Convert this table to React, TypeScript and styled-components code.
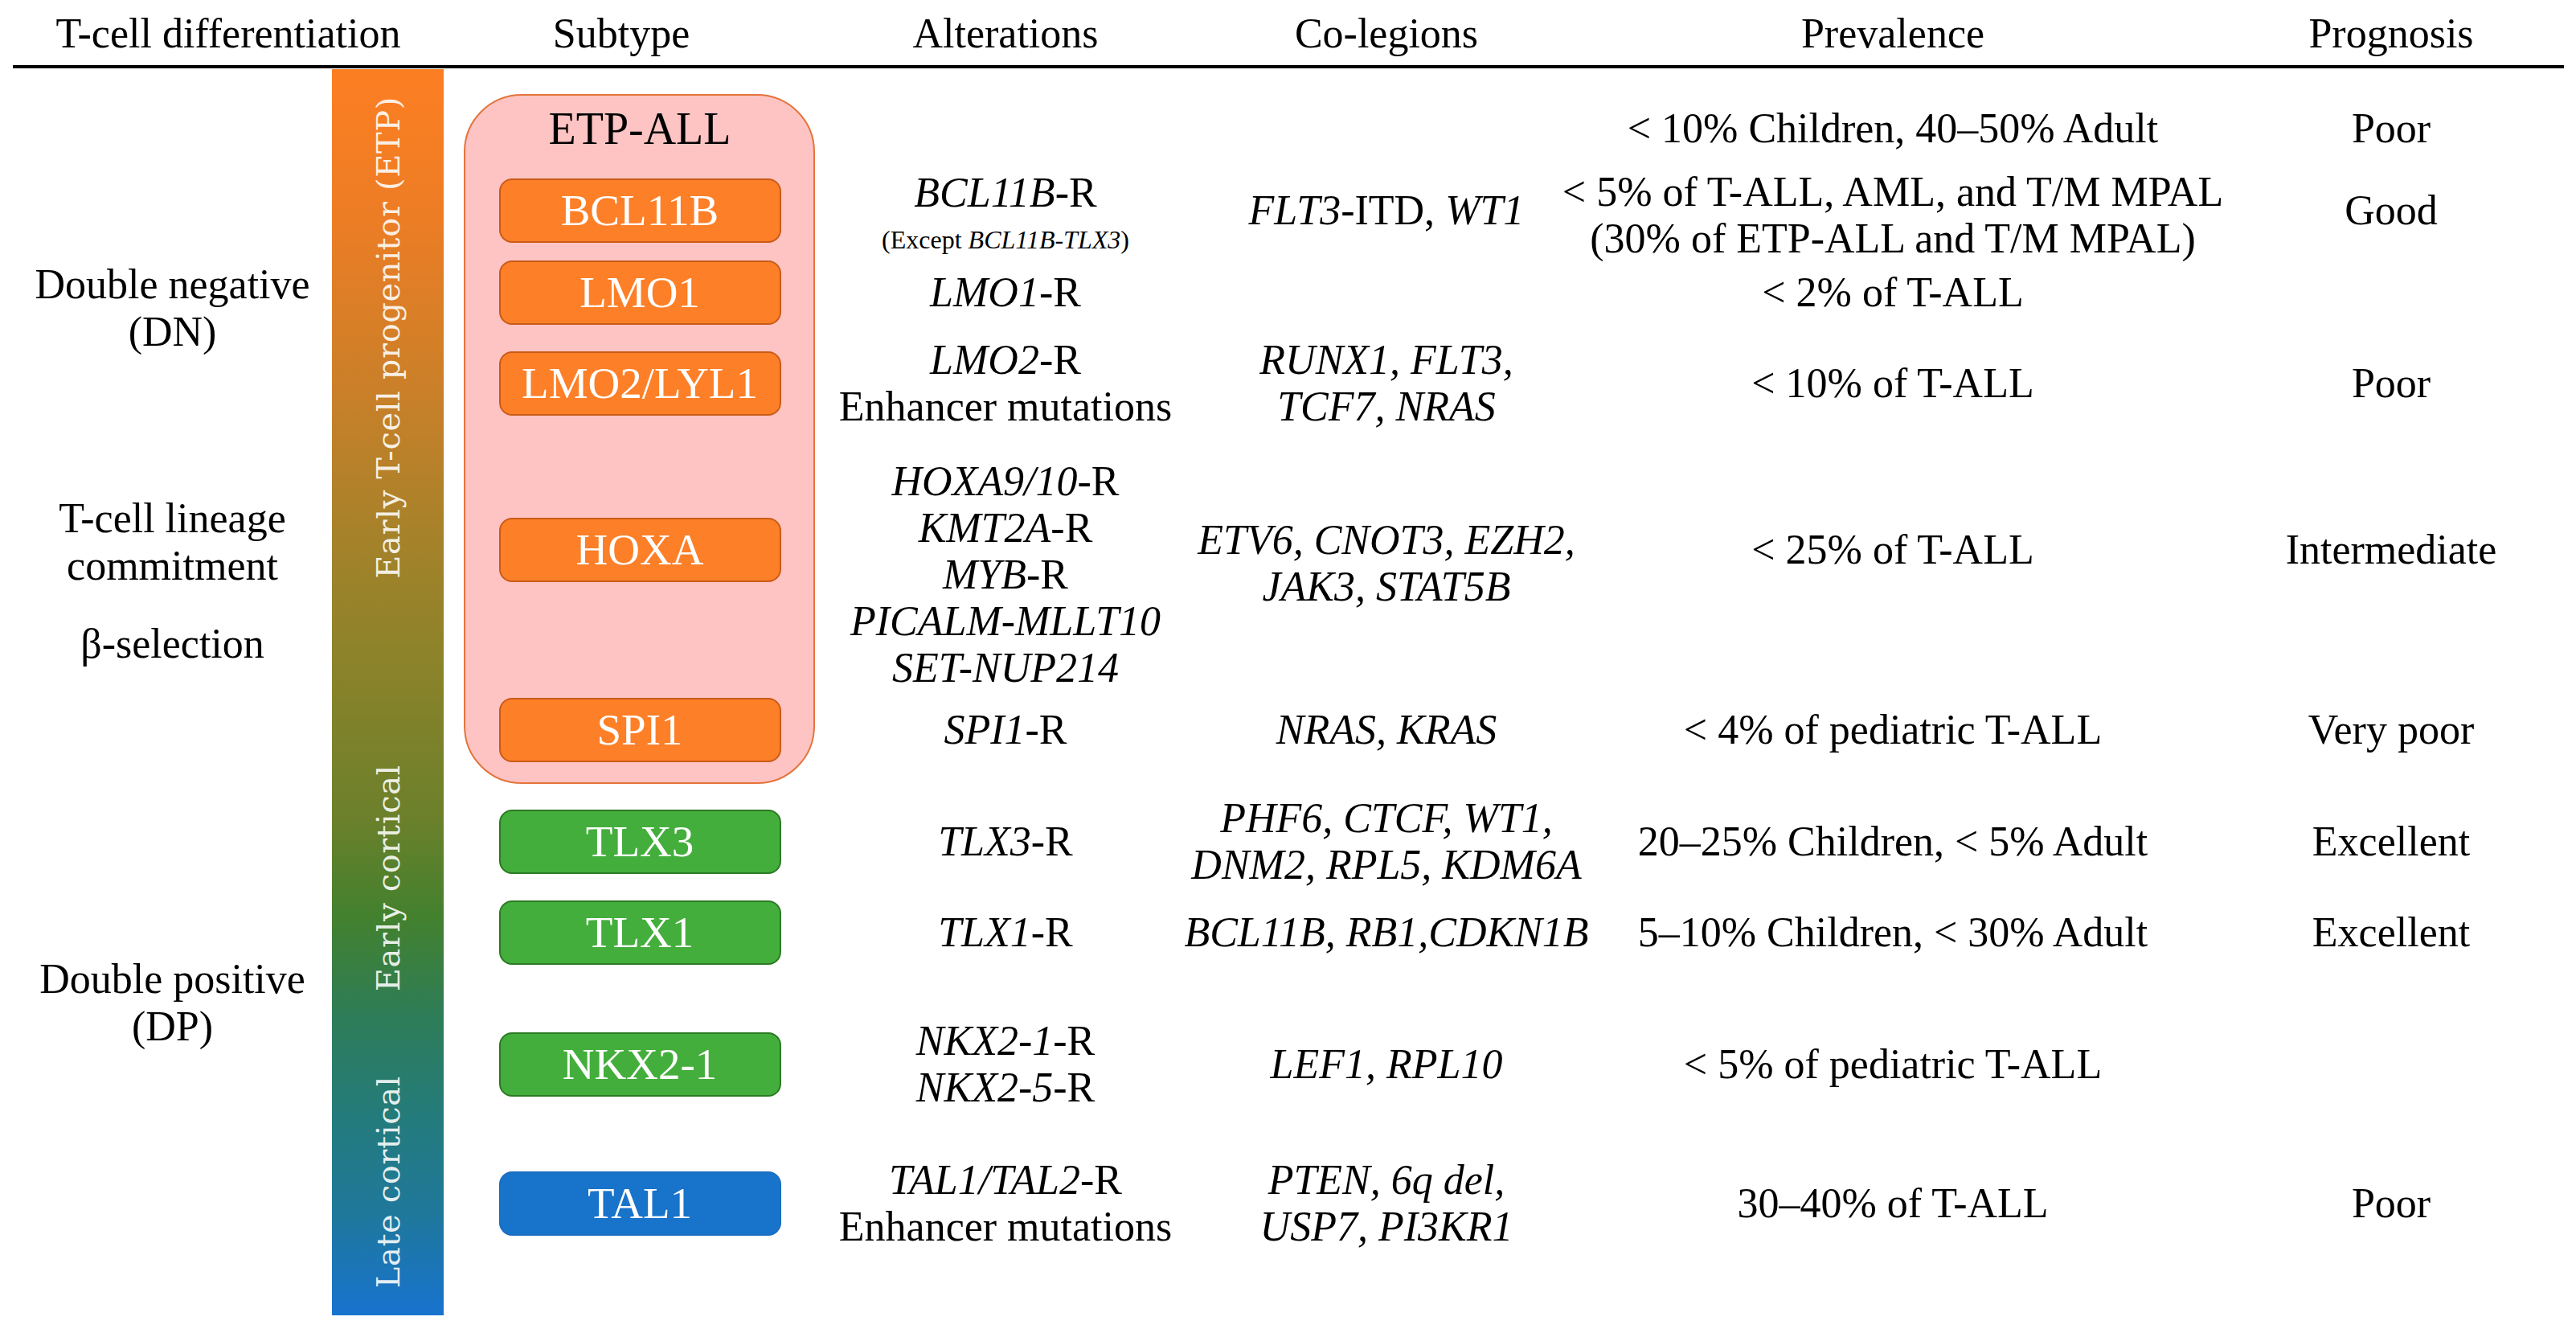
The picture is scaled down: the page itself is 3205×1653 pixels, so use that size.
import React from "react";
import styled, { createGlobalStyle } from "styled-components";

type Tone = "orange" | "green" | "blue";

interface SubtypeRow {
  id: string;
  subtype: { label: string; tone: Tone } | null;
  alt?: React.ReactNode;
  coLesions?: React.ReactNode;
  prevalence?: React.ReactNode;
  prognosis?: string;
  dy?: { alt?: number; col?: number; prev?: number };
}

const TONES: Record<Tone, { fill: string; edge: string }> = {
  orange: { fill: "#fd7f27", edge: "#c95b18" },
  green: { fill: "#44ae3c", edge: "#2b7a23" },
  blue: { fill: "#1873cb", edge: "#1b6ec0" },
};

// heights of the ten data rows, chosen so that each row centre sits where the figure has it
const ROW_HEIGHTS = [100, 104, 100, 126, 288, 160, 118, 108, 220, 126];

const GlobalStyle = createGlobalStyle`
  html, body {
    margin: 0;
    padding: 0;
    background: #ffffff;
  }
  body {
    font-family: "Liberation Serif", "Times New Roman", serif;
    color: #000000;
    overflow: hidden;
  }
`;

const Page = styled.div`
  width: 3174px;
  padding: 0 15px 0 16px;
`;

const Header = styled.div`
  display: grid;
  grid-template-columns: 536px 442px 514px 434px 826px 414px;
  padding: 12px 0 9px;
  border-bottom: 4px solid #000000;
  font-size: 52px;
  line-height: 60px;
`;

const HeadCell = styled.div`
  text-align: center;
  white-space: nowrap;
`;

const Body = styled.div`
  display: grid;
  grid-template-columns: 397px 139px 488px 422px 526px 734px 38px 430px;
  grid-template-rows: 24px ${ROW_HEIGHTS.map((h) => `${h}px`).join(" ")} 76px;
  margin-top: 1px;
`;

const StageColumn = styled.div`
  grid-column: 1;
  grid-row: 1 / -1;
  display: flex;
  flex-direction: column;
  align-items: center;
  font-size: 52px;
  line-height: 59px;
  text-align: center;
  white-space: nowrap;
`;

const Stage = styled.div<{ $gap: number }>`
  margin-top: ${(p) => p.$gap}px;
`;

const Bar = styled.div`
  grid-column: 2;
  grid-row: 1 / -1;
  display: flex;
  flex-direction: column;
  background: linear-gradient(
    to bottom,
    #fd7e22 0%,
    #ec7d25 12%,
    #c98029 26%,
    #a4822a 38%,
    #8d832a 47%,
    #6c802b 60%,
    #43812e 68%,
    #2e7d58 76%,
    #247b7b 84%,
    #1f789c 92%,
    #1873cf 100%
  );
`;

const BarSlot = styled.div<{ $h: number; $gap: number }>`
  flex: none;
  height: ${(p) => p.$h}px;
  margin-top: ${(p) => p.$gap}px;
  display: flex;
  align-items: center;
  justify-content: center;
`;

const BarLabel = styled.span`
  writing-mode: vertical-rl;
  transform: rotate(180deg);
  font-family: "DejaVu Serif", serif;
  font-size: 40px;
  letter-spacing: 0.6px;
  color: rgba(255, 255, 255, 0.88);
  white-space: nowrap;
`;

const EtpGroup = styled.div`
  grid-column: 3;
  grid-row: 2 / 8;
  margin: 7px 26px 13px 25px;
  background: #fec3c3;
  border: 2px solid #e4743c;
  border-radius: 72px;
`;

const Cell = styled.div<{ $row: number; $col: number; $dy?: number }>`
  grid-row: ${(p) => p.$row};
  grid-column: ${(p) => p.$col};
  align-self: center;
  justify-self: center;
  text-align: center;
  white-space: nowrap;
  font-size: 52px;
  line-height: 58px;
  ${(p) =>
    p.$dy
      ? p.$dy > 0
        ? `padding-top: ${p.$dy * 2}px;`
        : `padding-bottom: ${-p.$dy * 2}px;`
      : ""}
`;

const GroupTitle = styled.div`
  font-size: 56px;
  line-height: 60px;
`;

const SubtypeBox = styled.div<{ $tone: Tone }>`
  box-sizing: border-box;
  width: 351px;
  height: 80px;
  border-radius: 16px;
  border: 2px solid ${(p) => TONES[p.$tone].edge};
  background: ${(p) => TONES[p.$tone].fill};
  color: #ffffff;
  font-size: 55px;
  line-height: 76px;
  text-align: center;
`;

const Line = styled.div``;

const Note = styled.div`
  font-size: 32px;
  line-height: 58px;
`;

const G = styled.i`
  font-style: italic;
`;

const rows: SubtypeRow[] = [
  {
    id: "etp",
    subtype: null,
    prevalence: "< 10% Children, 40–50% Adult",
    prognosis: "Poor",
  },
  {
    id: "bcl11b",
    subtype: { label: "BCL11B", tone: "orange" },
    alt: (
      <>
        <Line>
          <G>BCL11B</G>-R
        </Line>
        <Note>
          (Except <G>BCL11B-TLX3</G>)
        </Note>
      </>
    ),
    coLesions: (
      <>
        <G>FLT3</G>-ITD, <G>WT1</G>
      </>
    ),
    prevalence: (
      <>
        <Line>&lt; 5% of T-ALL, AML, and T/M MPAL</Line>
        <Line>(30% of ETP-ALL and T/M MPAL)</Line>
      </>
    ),
    prognosis: "Good",
    dy: { alt: 7, prev: 6 },
  },
  {
    id: "lmo1",
    subtype: { label: "LMO1", tone: "orange" },
    alt: (
      <>
        <G>LMO1</G>-R
      </>
    ),
    prevalence: "< 2% of T-ALL",
  },
  {
    id: "lmo2",
    subtype: { label: "LMO2/LYL1", tone: "orange" },
    alt: (
      <>
        <Line>
          <G>LMO2</G>-R
        </Line>
        <Line>Enhancer mutations</Line>
      </>
    ),
    coLesions: (
      <>
        <Line>
          <G>RUNX1, FLT3,</G>
        </Line>
        <Line>
          <G>TCF7, NRAS</G>
        </Line>
      </>
    ),
    prevalence: "< 10% of T-ALL",
    prognosis: "Poor",
  },
  {
    id: "hoxa",
    subtype: { label: "HOXA", tone: "orange" },
    alt: (
      <>
        <Line>
          <G>HOXA9/10</G>-R
        </Line>
        <Line>
          <G>KMT2A</G>-R
        </Line>
        <Line>
          <G>MYB</G>-R
        </Line>
        <Line>
          <G>PICALM-MLLT10</G>
        </Line>
        <Line>
          <G>SET-NUP214</G>
        </Line>
      </>
    ),
    coLesions: (
      <>
        <Line>
          <G>ETV6, CNOT3, EZH2,</G>
        </Line>
        <Line>
          <G>JAK3, STAT5B</G>
        </Line>
      </>
    ),
    prevalence: "< 25% of T-ALL",
    prognosis: "Intermediate",
    dy: { alt: 31, col: 17 },
  },
  {
    id: "spi1",
    subtype: { label: "SPI1", tone: "orange" },
    alt: (
      <>
        <G>SPI1</G>-R
      </>
    ),
    coLesions: <G>NRAS, KRAS</G>,
    prevalence: "< 4% of pediatric T-ALL",
    prognosis: "Very poor",
  },
  {
    id: "tlx3",
    subtype: { label: "TLX3", tone: "green" },
    alt: (
      <>
        <G>TLX3</G>-R
      </>
    ),
    coLesions: (
      <>
        <Line>
          <G>PHF6, CTCF, WT1,</G>
        </Line>
        <Line>
          <G>DNM2, RPL5, KDM6A</G>
        </Line>
      </>
    ),
    prevalence: "20–25% Children, < 5% Adult",
    prognosis: "Excellent",
  },
  {
    id: "tlx1",
    subtype: { label: "TLX1", tone: "green" },
    alt: (
      <>
        <G>TLX1</G>-R
      </>
    ),
    coLesions: <G>BCL11B, RB1,CDKN1B</G>,
    prevalence: "5–10% Children, < 30% Adult",
    prognosis: "Excellent",
  },
  {
    id: "nkx2",
    subtype: { label: "NKX2-1", tone: "green" },
    alt: (
      <>
        <Line>
          <G>NKX2-1</G>-R
        </Line>
        <Line>
          <G>NKX2-5</G>-R
        </Line>
      </>
    ),
    coLesions: <G>LEF1, RPL10</G>,
    prevalence: "< 5% of pediatric T-ALL",
  },
  {
    id: "tal1",
    subtype: { label: "TAL1", tone: "blue" },
    alt: (
      <>
        <Line>
          <G>TAL1/TAL2</G>-R
        </Line>
        <Line>Enhancer mutations</Line>
      </>
    ),
    coLesions: (
      <>
        <Line>
          <G>PTEN, 6q del,</G>
        </Line>
        <Line>
          <G>USP7, PI3KR1</G>
        </Line>
      </>
    ),
    prevalence: "30–40% of T-ALL",
    prognosis: "Poor",
  },
];

const stages = [
  { id: "dn", gap: 238, lines: ["Double negative", "(DN)"] },
  { id: "commit", gap: 173, lines: ["T-cell lineage", "commitment"] },
  { id: "beta", gap: 38, lines: ["β-selection"] },
  { id: "dp", gap: 358, lines: ["Double positive", "(DP)"] },
];

const barLabels = [
  { id: "etp", h: 668, gap: 0, text: "Early T-cell progenitor (ETP)" },
  { id: "early", h: 376, gap: 150, text: "Early cortical" },
  { id: "late", h: 320, gap: 30, text: "Late cortical" },
];

const headings = [
  "T-cell differentiation",
  "Subtype",
  "Alterations",
  "Co-legions",
  "Prevalence",
  "Prognosis",
];

export default function App(): JSX.Element {
  return (
    <Page>
      <GlobalStyle />
      <Header>
        {headings.map((h) => (
          <HeadCell key={h}>{h}</HeadCell>
        ))}
      </Header>
      <Body>
        <StageColumn>
          {stages.map((s) => (
            <Stage key={s.id} $gap={s.gap}>
              {s.lines.map((l) => (
                <Line key={l}>{l}</Line>
              ))}
            </Stage>
          ))}
        </StageColumn>

        <Bar>
          {barLabels.map((b) => (
            <BarSlot key={b.id} $h={b.h} $gap={b.gap}>
              <BarLabel>{b.text}</BarLabel>
            </BarSlot>
          ))}
        </Bar>

        <EtpGroup />

        {rows.map((r, i) => {
          const row = i + 2;
          return (
            <React.Fragment key={r.id}>
              <Cell $row={row} $col={3}>
                {r.subtype ? (
                  <SubtypeBox $tone={r.subtype.tone}>{r.subtype.label}</SubtypeBox>
                ) : (
                  <GroupTitle>ETP-ALL</GroupTitle>
                )}
              </Cell>
              {r.alt && (
                <Cell $row={row} $col={4} $dy={r.dy?.alt}>
                  {r.alt}
                </Cell>
              )}
              {r.coLesions && (
                <Cell $row={row} $col={5} $dy={r.dy?.col}>
                  {r.coLesions}
                </Cell>
              )}
              {r.prevalence && (
                <Cell $row={row} $col={6} $dy={r.dy?.prev}>
                  {r.prevalence}
                </Cell>
              )}
              {r.prognosis && (
                <Cell $row={row} $col={8}>
                  {r.prognosis}
                </Cell>
              )}
            </React.Fragment>
          );
        })}
      </Body>
    </Page>
  );
}
